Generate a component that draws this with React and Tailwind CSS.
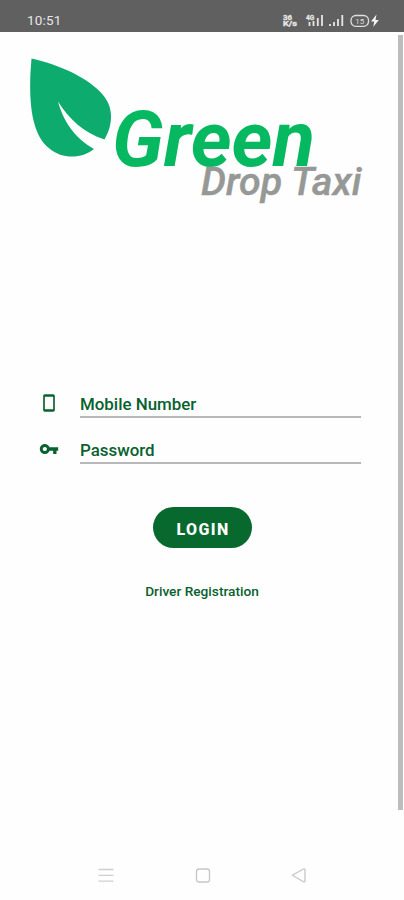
import React, { useState } from "react";

const StatusBar = () => (
  <header className="flex h-8 shrink-0 items-start justify-between bg-[#606060] pl-[27px] pr-[24px] pt-[12px] text-[#e6e6e6]">
    <span className="text-[13.5px] leading-[16px] tracking-[0.2px]">10:51</span>
    <svg className="mt-px" width="98" height="16" viewBox="282 13 98 16" fill="none">
      {/* Data rate */}
      <g fill="#e6e6e6" stroke="#e6e6e6" strokeWidth="0.3" fontFamily="Roboto, sans-serif" fontWeight="700">
        <text x="283" y="20.3" fontSize="6.5" textLength="9" lengthAdjust="spacingAndGlyphs">36</text>
        <text x="283" y="26.3" fontSize="6.5" textLength="14" lengthAdjust="spacingAndGlyphs">K/s</text>
        <text x="306" y="20" fontSize="6.5">4G</text>
      </g>
      {/* Signal bars */}
      <g stroke="#e6e6e6" strokeWidth="1.8">
        <path d="M309.5 26v-4M313.5 26v-5M317.8 26v-8M322 26V15" />
        <path d="M330 26v-2M334 26v-4M338 26v-7M342.3 26V15" />
      </g>
      {/* Battery */}
      <rect x="351" y="15.5" width="17.5" height="10.8" rx="4.8" stroke="#dedede" strokeWidth="1.3" />
      <text x="355.3" y="23.8" fontSize="8" fill="#dedede" fontFamily="Roboto, sans-serif">15</text>
      <path d="M376.5 14.5l-5.5 7h3.2l-1 5.5 5.6-7h-3.3z" fill="#f5f5f5" />
    </svg>
  </header>
);

const Logo = () => (
  <svg width="404" height="178" viewBox="0 32 404 178" fontFamily="Roboto, sans-serif" fontStyle="italic">
    <path
      d="M31.5 58.5C60 65 89 78 103 95C115 109 112 127 104.5 139.5C84 133 69 119 58 101.5C63 120 74 138 94 149C82 159 62 159 50 149C32 136 29 104 30.5 72Z"
      fill="#0dab6d"
    />
    <text x="112" y="165.7" fontSize="77" fontWeight="700" fill="#06b960" textLength="203" lengthAdjust="spacingAndGlyphs">
      Green
    </text>
    <text x="201" y="195" fontSize="38.5" fontWeight="500" fill="#969896" stroke="#969896" strokeWidth="0.4" textLength="160.5" lengthAdjust="spacingAndGlyphs">
      Drop Taxi
    </text>
  </svg>
);

const PhoneIcon = () => (
  <svg width="20" height="20" viewBox="0 0 24 24" fill="#08612e">
    <path d="M17 1.5H7c-1.1 0-2 .9-2 2v17c0 1.1.9 2 2 2h10c1.1 0 2-.9 2-2v-17c0-1.1-.9-2-2-2zM17 19.5H7v-15h10v15z" />
  </svg>
);

const KeyIcon = () => (
  <svg width="20" height="20" viewBox="0 0 24 24" fill="#08612e">
    <path d="M12.65 10C11.83 7.67 9.61 6 7 6c-3.31 0-6 2.69-6 6s2.69 6 6 6c2.61 0 4.83-1.67 5.65-4H17v4h4v-4h2v-4H12.65zM7 14.5c-1.4 0-2.5-1.1-2.5-2.5S5.600 9.500 7 9.500s2.500 1.100 2.500 2.500S8.400 14.500 7 14.500z" />
  </svg>
);

const Field = ({ icon, label, type, value, onChange }) => (
  <label className="flex h-[46px] items-start">
    <span className="mt-[6px] w-[41px] shrink-0">{icon}</span>
    <input
      type={type}
      placeholder={label}
      aria-label={label}
      value={value}
      onChange={(e) => onChange(e.target.value)}
      className="h-[31px] w-[281px] border-b-2 border-[#b8b8b8] bg-transparent pt-[4px] text-[16.9px] font-medium text-[#08612e] outline-none placeholder:text-[#08612e] placeholder:opacity-100"
    />
  </label>
);

const NavBar = () => (
  <nav className="flex h-[50px] shrink-0 items-center justify-between pl-[97px] pr-[96px]">
    <svg width="18" height="18" viewBox="0 0 18 18" stroke="#cfcfcf" strokeWidth="1.3">
      <path d="M1.5 3.5h15M1.5 9.3h15M1.5 15.2h15" />
    </svg>
    <svg width="18" height="18" viewBox="0 0 18 18" fill="none" stroke="#c6c6c6" strokeWidth="1.3">
      <rect x="2.5" y="3" width="13" height="13" rx="2.5" />
    </svg>
    <svg width="18" height="18" viewBox="0 0 18 18" fill="none" stroke="#c6c6c6" strokeWidth="1.3" strokeLinejoin="round">
      <path d="M2.3 9.3L13.5 3q1.5-.5 1.5 1v10.8q0 1.5-1.5 1z" />
    </svg>
  </nav>
);

const App = () => {
  const [mobile, setMobile] = useState("");
  const [password, setPassword] = useState("");

  return (
    <div className="flex h-[900px] w-[404px] flex-col overflow-hidden bg-[#fefefe] font-['Roboto',sans-serif]">
      <StatusBar />
      <main className="grid flex-1 grid-cols-1 grid-rows-1">
        <div className="col-start-1 row-start-1 flex flex-col items-start">
          <Logo />
          <form className="mt-[177px] flex w-full flex-col pl-[39px]" onSubmit={(e) => e.preventDefault()}>
            <Field icon={<PhoneIcon />} label="Mobile Number" type="tel" value={mobile} onChange={setMobile} />
            <Field icon={<KeyIcon />} label="Password" type="password" value={password} onChange={setPassword} />
            <button
              type="submit"
              className="ml-[114px] mt-[28px] h-[41px] w-[99px] rounded-full bg-[#08692f] pl-px pt-[5px] text-[16px] font-extrabold tracking-[1.4px] text-white"
            >
              LOGIN
            </button>
          </form>
          <a href="#register" className="mt-[33px] self-center text-[13.7px] font-medium leading-[20px] text-[#08612e]">
            Driver Registration
          </a>
        </div>
        {/* Scroll indicator */}
        <div className="col-start-1 row-start-1 mr-px mt-[3px] h-[775px] w-[5px] justify-self-end bg-[#bdbdbd]" />
      </main>
      <NavBar />
    </div>
  );
};

export default App;
